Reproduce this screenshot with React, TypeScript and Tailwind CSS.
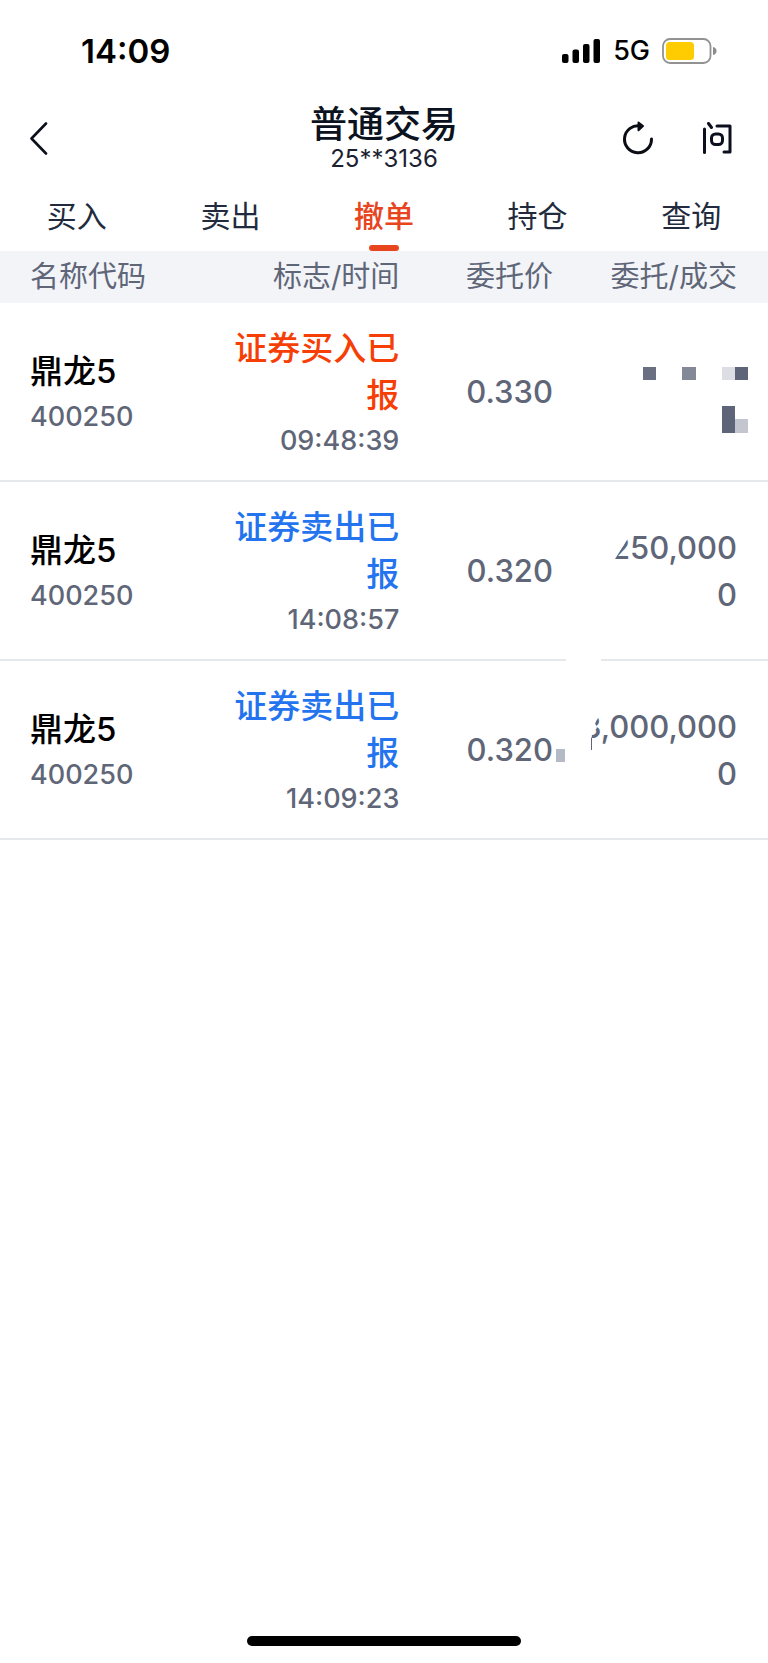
import clsx from "clsx";
import { ReactNode } from "react";

type Side = "buy" | "sell";

type Order = {
  id: number;
  name: string;
  code: string;
  side: Side;
  status: string;
  time: string;
  price: string;
  amount: ReactNode;
  priceMark?: ReactNode;
};

const tabs = ["买入", "卖出", "撤单", "持仓", "查询"];
const activeTab = "撤单";

const SignalIcon = () => (
  <svg width="39" height="25" viewBox="0 0 39 25" aria-hidden="true">
    <rect x="0" y="15" width="6.5" height="9" rx="2" />
    <rect x="10.5" y="10.5" width="6.5" height="13.5" rx="2" />
    <rect x="21" y="5" width="6.5" height="19" rx="2" />
    <rect x="31.5" y="0" width="6.5" height="24" rx="2" />
  </svg>
);

const BatteryIcon = () => (
  <svg width="55" height="26" viewBox="0 0 55 26" aria-hidden="true">
    <rect
      x="1"
      y="1"
      width="47.5"
      height="24"
      rx="7"
      fill="none"
      stroke="#929292"
      strokeWidth="1.8"
    />
    <rect x="4" y="4" width="28" height="18" rx="3.5" fill="#ffcc02" />
    <path d="M51 9c2.4.6 3.5 2 3.5 4s-1.1 3.4-3.5 4z" fill="#8c8c8c" />
  </svg>
);

const BackIcon = () => (
  <svg
    width="18"
    height="33"
    viewBox="0 0 18 33"
    fill="none"
    stroke="#0b101c"
    strokeWidth="2.6"
    strokeLinecap="round"
    strokeLinejoin="round"
    aria-hidden="true"
  >
    <path d="M16 1.5 1.5 16.5 16 31.5" />
  </svg>
);

const RefreshIcon = () => (
  <svg
    width="32"
    height="34"
    viewBox="0 0 32 34"
    fill="none"
    stroke="#0b0d14"
    strokeWidth="3"
    strokeLinecap="round"
    strokeLinejoin="round"
    aria-hidden="true"
  >
    <path d="M29.5 18A13.5 13.5 0 1 1 18.5 5" />
    <path d="M16.5 1.6 21 5 16.5 9.2z" fill="#0b0d14" strokeWidth="2" />
  </svg>
);

const AskIcon = () => (
  <svg
    width="30"
    height="33"
    viewBox="0 0 30 33"
    fill="none"
    stroke="#0b101c"
    strokeWidth="3"
    strokeLinecap="round"
    strokeLinejoin="round"
    aria-hidden="true"
  >
    <path d="M2.5 7v23.5" />
    <path d="M6.5 1.5 9.5 5.5" />
    <path d="M15 4h13v26h-6" />
    <rect x="9.5" y="12" width="11" height="10.5" rx="4" />
  </svg>
);

const StatusBar = () => (
  <div className="flex h-[102px] items-center justify-between pr-[51px] pl-[81px] text-black">
    <span className="text-[33px] leading-10 font-semibold">14:09</span>
    <div className="flex items-center gap-3">
      <SignalIcon />
      <span className="text-[27px] leading-10 font-medium">5G</span>
      <BatteryIcon />
    </div>
  </div>
);

const Header = () => (
  <header className="grid h-[72px] grid-cols-[1fr_auto_1fr] items-center px-[30px]">
    <button type="button" aria-label="返回" className="justify-self-start">
      <BackIcon />
    </button>
    <div className="pt-1 text-center text-[#0b1220]">
      <h1 className="text-[37px] leading-[38px] font-medium">普通交易</h1>
      <p className="text-[24px] leading-[30px] text-[#1b2130]">25**3136</p>
    </div>
    <div className="mr-1.5 flex items-center gap-12 justify-self-end">
      <button type="button" aria-label="刷新">
        <RefreshIcon />
      </button>
      <button type="button" aria-label="问">
        <AskIcon />
      </button>
    </div>
  </header>
);

const Tabs = () => (
  <nav className="grid grid-cols-5">
    {tabs.map((tab) => (
      <a
        key={tab}
        href="#"
        aria-current={tab === activeTab ? "page" : undefined}
        className={clsx(
          "flex flex-col items-center gap-[7px] pt-5 text-[30px] leading-[44px]",
          tab === activeTab ? "font-medium text-[#e8441d]" : "text-[#222b3d]",
        )}
      >
        {tab}
        <span
          className={clsx(
            "h-1.5 w-[30px] rounded-full",
            tab === activeTab && "bg-[#e8441d]",
          )}
        />
      </a>
    ))}
  </nav>
);

// Mosaic that hides the amounts of the first order
const HiddenAmount = () => (
  <svg
    width="106"
    height="83"
    viewBox="0 -17 106 83"
    role="img"
    aria-label="已隐藏"
    shapeRendering="crispEdges"
    className="-mr-3 ml-auto"
  >
    <rect x="0" y="0" width="13" height="13" fill="#6a7082" />
    <rect x="39" y="0" width="14" height="13" fill="#838997" />
    <rect x="79" y="0" width="13" height="13" fill="#dcdee3" />
    <rect x="92" y="0" width="13" height="13" fill="#5f6579" />
    <rect x="79" y="39" width="13" height="27" fill="#5f6579" />
    <rect x="92" y="52" width="13" height="14" fill="#c3c6ce" />
  </svg>
);

const Amount = ({ total, cover }: { total: string; cover: ReactNode }) => (
  <>
    <div className="relative ml-auto w-fit">
      {total}
      <svg
        width="24"
        height="47"
        viewBox="0 0 24 47"
        className="absolute top-0 left-0"
        aria-hidden="true"
      >
        {cover}
      </svg>
    </div>
    <div>0</div>
  </>
);

const orders: Order[] = [
  {
    id: 1,
    name: "鼎龙5",
    code: "400250",
    side: "buy",
    status: "证券买入已报",
    time: "09:48:39",
    price: "0.330",
    amount: <HiddenAmount />,
  },
  {
    id: 2,
    name: "鼎龙5",
    code: "400250",
    side: "sell",
    status: "证券卖出已报",
    time: "14:08:57",
    price: "0.320",
    amount: (
      <Amount
        total="250,000"
        cover={<path d="M0 0H19V12L16 16 4 35V47H0Z" fill="#fff" />}
      />
    ),
  },
  {
    id: 3,
    name: "鼎龙5",
    code: "400250",
    side: "sell",
    status: "证券卖出已报",
    time: "14:09:23",
    price: "0.320",
    amount: (
      <Amount
        total="3,000,000"
        cover={
          <>
            <path d="M0 0H18V12L13 20 15 25 10 30 9 47H0Z" fill="#fff" />
            <path d="M9.5 47V35L13 33" fill="none" stroke="#5f6678" />
          </>
        }
      />
    ),
    priceMark: (
      <span className="absolute top-full left-full -mt-6 ml-[3px] h-[13px] w-[9px] bg-[#b5bac6]" />
    ),
  },
];

const OrderRow = ({ order }: { order: Order }) => (
  <tr className="border-b-2 border-[#e6e9ec] font-medium">
    <td className="pt-5 pb-4 pl-[30px]">
      <div className="text-[33px] leading-[47px] text-black">{order.name}</div>
      <div className="text-[27px] leading-[44px]">{order.code}</div>
    </td>
    <td className="pt-[22px] pb-[17px] text-right">
      <div
        className={clsx(
          "text-[33px] leading-[47px]",
          order.side === "buy" ? "text-[#f63f06]" : "text-[#2474f0]",
        )}
      >
        {order.status}
      </div>
      <div className="text-[27px] leading-[44px]">{order.time}</div>
    </td>
    <td className="text-right text-[31px] leading-[47px]">
      <span className="relative inline-block">
        {order.price}
        {order.priceMark}
      </span>
    </td>
    <td className="pr-[31px] text-right text-[31px] leading-[47px]">
      {order.amount}
    </td>
  </tr>
);

const OrderTable = () => (
  <div className="relative">
    <table className="w-full table-fixed border-collapse text-[#5f6678]">
      <thead className="bg-[#f2f4f8] text-[29px] leading-[52px]">
        <tr>
          <th className="w-[29%] pl-[30px] text-left font-normal">名称代码</th>
          <th className="w-[23%] text-right font-normal">标志/时间</th>
          <th className="w-[20%] text-right font-normal">委托价</th>
          <th className="pr-[31px] text-right font-normal">委托/成交</th>
        </tr>
      </thead>
      <tbody>
        {orders.map((order) => (
          <OrderRow key={order.id} order={order} />
        ))}
      </tbody>
    </table>
    {/* wiped spot on the second divider */}
    <span className="absolute bottom-[175px] left-[73.7%] h-2 w-[35px] bg-white" />
  </div>
);

export default function App() {
  return (
    <div className="flex min-h-screen flex-col bg-white font-['Inter','Noto_Sans_CJK_SC',sans-serif]">
      <StatusBar />
      <Header />
      <Tabs />
      <main className="flex-1">
        <OrderTable />
      </main>
      <div className="mx-auto mb-[17px] h-2.5 w-[35.7%] rounded-full bg-black" />
    </div>
  );
}
